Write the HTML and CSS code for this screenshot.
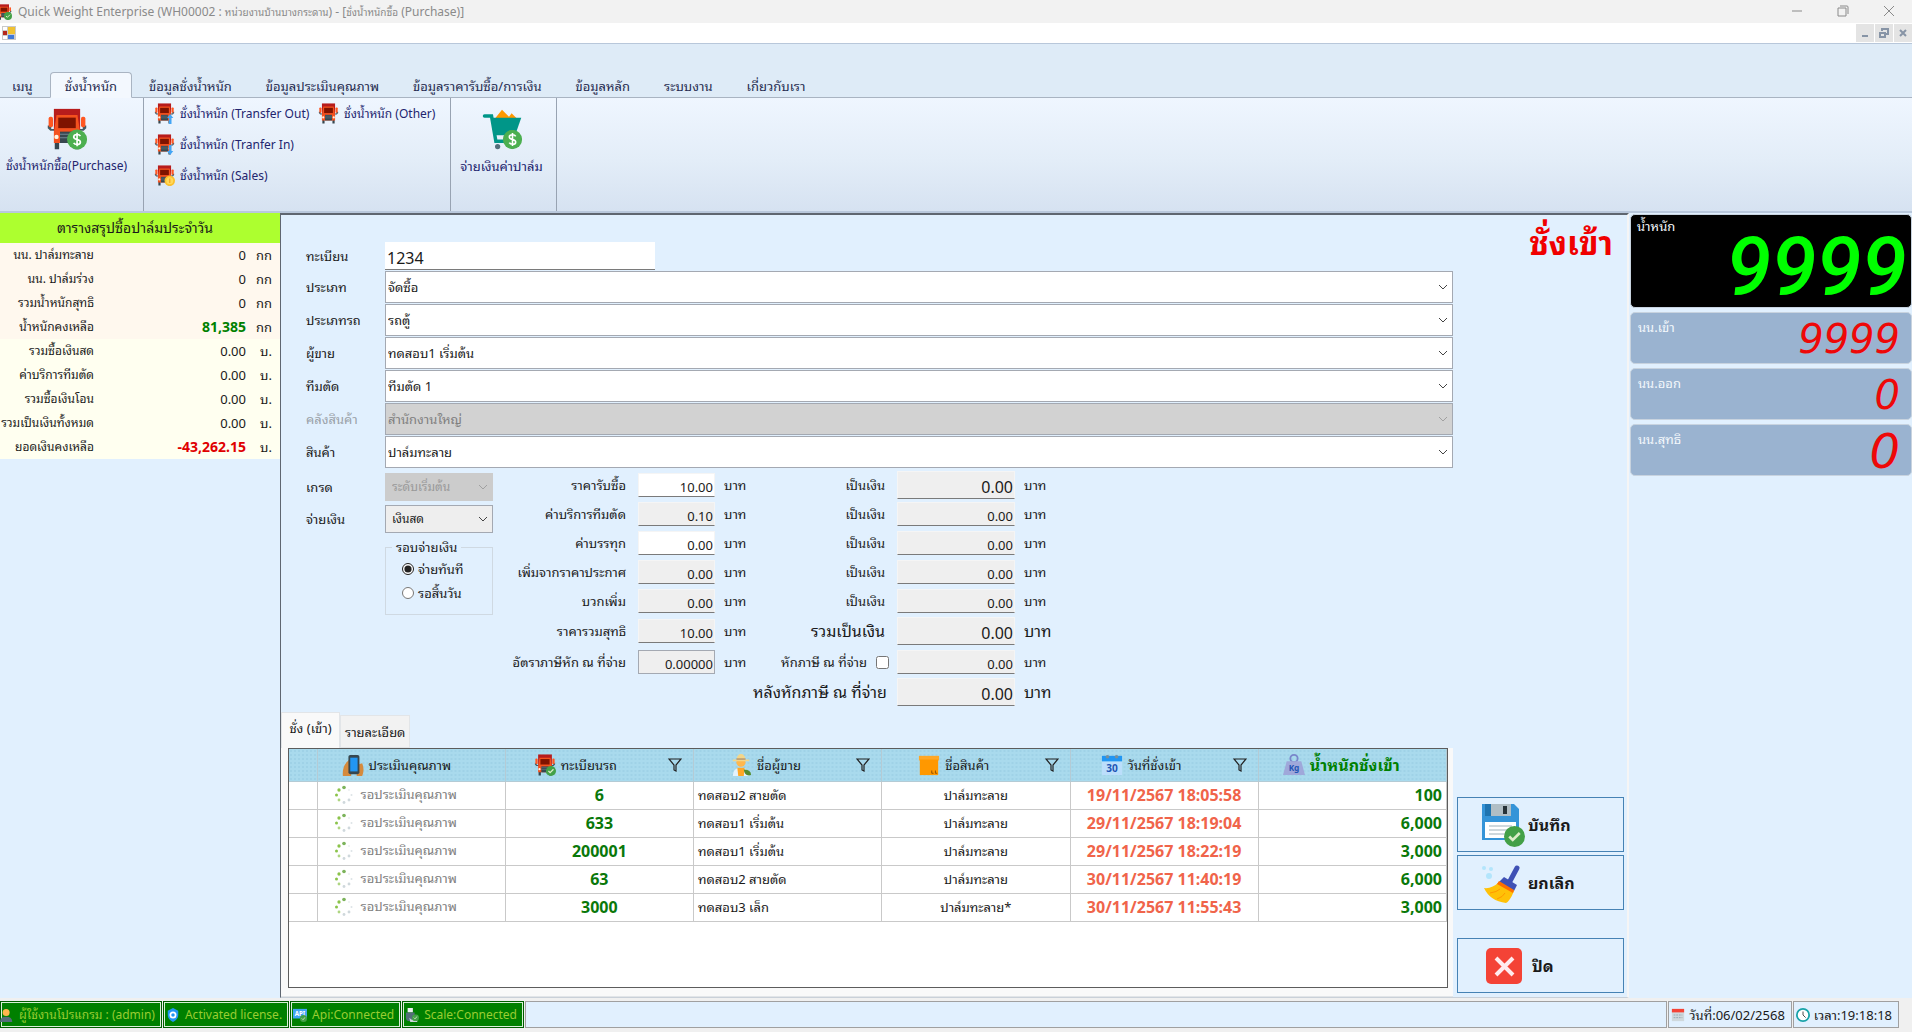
FILE: index.html
```
<!DOCTYPE html>
<html lang="th">
<head>
  <meta charset="UTF-8">
  <meta name="viewport" content="width=device-width, initial-scale=1.0">
  <title>Quick Weight Enterprise</title>
  <link rel="stylesheet" href="styles.css">
</head>
<body>
  <!-- Shared icons -->
  <svg class="icon-defs" aria-hidden="true">
    <symbol id="truck" viewBox="0 0 48 48">
      <path d="M10 38h5v9h-5zM33 38h5v9h-5z" fill="#37474f"/>
      <path d="M2 20h4v4h36v-4h4v3l-3 3H5l-3-3z" fill="#455a64"/>
      <path d="M9 1h30v26H9z" fill="#b71c1c"/>
      <path d="M12 8h24l3 20v12H9V28z" fill="#f4511e"/>
      <path d="M14 11h20v12H14z" fill="#7f1300"/>
      <rect x="3" y="10" width="5" height="12" rx="2" fill="#ff5722"/>
      <rect x="40" y="10" width="5" height="12" rx="2" fill="#ff5722"/>
      <path d="M16 27h16v13H16z" fill="#37474f"/>
      <path d="M16 30h16M16 34h16" stroke="#78909c" stroke-width="1"/>
      <circle cx="12" cy="33" r="2.500" fill="#fff3e0"/>
      <circle cx="36" cy="33" r="2.500" fill="#fff3e0"/>
    </symbol>
    <symbol id="dollar" viewBox="0 0 24 24">
      <circle cx="12" cy="12" r="12" fill="#4caf50"/>
      <path d="M16 8q-1-2-4-2-4 0-4 3 0 2 4 3t4 3q0 3-4 3-3 0-4-2M12 4v16" fill="none" stroke="#fff" stroke-width="2"/>
    </symbol>
    <symbol id="check" viewBox="0 0 24 24">
      <circle cx="12" cy="12" r="12" fill="#43a047"/>
      <path d="M6 12l4 4 8-8" fill="none" stroke="#dcedc8" stroke-width="3"/>
    </symbol>
    <symbol id="spinner" viewBox="0 0 24 24">
      <circle cx="12" cy="3" r="2.200" fill="#7cb35b"/>
      <circle cx="6" cy="6" r="2" fill="#8bc34a"/>
      <circle cx="3" cy="12" r="1.800" fill="#8bc34a"/>
      <circle cx="6" cy="18" r="1.700" fill="#aed581"/>
      <circle cx="12" cy="21" r="1.700" fill="#cfd8dc"/>
      <circle cx="18" cy="18" r="1.700" fill="#cfd8dc"/>
      <circle cx="21" cy="12" r="1.200" fill="#dde3e6"/>
      <circle cx="18" cy="6" r="1" fill="#dde3e6"/>
    </symbol>
    <symbol id="funnel" viewBox="0 0 14 14">
      <path d="M1 1h12L8 7v6l-2-1V7z" fill="none" stroke="#222" stroke-width="1.200"/>
    </symbol>
  </svg>

  <header class="titlebar">
    <svg class="title-icon" viewBox="0 0 48 48"><use href="#truck"/><use href="#check" x="24" y="24" width="24" height="24"/></svg>
    <h1>Quick Weight Enterprise (WH00002 : <span>หน่วยงานบ้านบางกระดาน</span>) - [<span>ชั่งน้ำหนักซื้อ</span> (Purchase)]</h1>
    <div class="window-buttons">
      <button aria-label="Minimize"><svg viewBox="0 0 12 12"><path d="M1 6h10"/></svg></button>
      <button aria-label="Restore"><svg viewBox="0 0 12 12"><path d="M1 3h8v8H1zM3 1h7q1 0 1 1v7"/></svg></button>
      <button aria-label="Close"><svg viewBox="0 0 12 12"><path d="M1 1l10 10M11 1L1 11"/></svg></button>
    </div>
  </header>

  <div class="mdi-bar">
    <svg class="mdi-icon" viewBox="0 0 14 14">
      <path d="M0 0h14v14H0z" fill="#c9c9c9"/><path d="M1 1h4v3H1zM1 10h4v3H1z" fill="#fff"/>
      <path d="M1 5h4v4H1z" fill="#b5281c"/><path d="M6 1h7v7H6z" fill="#f0c132"/><path d="M6 9h6v4H6z" fill="#3f78d8"/>
    </svg>
    <div class="mdi-buttons">
      <button aria-label="Minimize form"><svg viewBox="0 0 10 10"><path d="M2 8h6"/></svg></button>
      <button aria-label="Restore form"><svg viewBox="0 0 10 10"><path d="M1 5h5v4H1zM3 3V1h6v5H7"/></svg></button>
      <button aria-label="Close form"><svg viewBox="0 0 10 10"><path d="M2 2l6 6M8 2L2 8"/></svg></button>
    </div>
  </div>

  <nav class="ribbon-tabs">
    <a href="#">เมนู</a>
    <a href="#" class="active">ชั่งน้ำหนัก</a>
    <a href="#">ข้อมูลชั่งน้ำหนัก</a>
    <a href="#">ข้อมูลประเมินคุณภาพ</a>
    <a href="#">ข้อมูลราคารับซื้อ/การเงิน</a>
    <a href="#">ข้อมูลหลัก</a>
    <a href="#">ระบบงาน</a>
    <a href="#">เกี่ยวกับเรา</a>
  </nav>

  <section class="ribbon">
    <div class="ribbon-group group-purchase">
      <button class="ribbon-large">
        <svg viewBox="0 0 48 48"><use href="#truck"/><use href="#dollar" x="24" y="24" width="23" height="24"/></svg>
        ชั่งน้ำหนักซื้อ(Purchase)
      </button>
    </div>
    <div class="ribbon-group group-weigh">
      <button class="ribbon-small"><svg viewBox="0 0 48 48"><use href="#truck"/><path d="M34 48V34h-4l7-9 7 9h-4v14z" fill="#42a5f5"/></svg>ชั่งน้ำหนัก (Transfer Out)</button>
      <button class="ribbon-small"><svg viewBox="0 0 48 48"><use href="#truck"/></svg>ชั่งน้ำหนัก (Other)</button>
      <button class="ribbon-small"><svg viewBox="0 0 48 48"><use href="#truck"/><path d="M34 25v14h-4l7 9 7-9h-4V25z" fill="#42a5f5"/></svg>ชั่งน้ำหนัก (Tranfer In)</button>
      <span></span>
      <button class="ribbon-small"><svg viewBox="0 0 48 48"><use href="#truck"/><circle cx="36" cy="36" r="12" fill="#fbc02d"/><circle cx="36" cy="36" r="8" fill="#ffd95a"/><path d="M36 31v10" stroke="#f9a825" stroke-width="3"/></svg>ชั่งน้ำหนัก (Sales)</button>
    </div>
    <div class="ribbon-group group-pay">
      <button class="ribbon-large">
        <svg viewBox="0 0 48 48">
          <path d="M16 12l8-10 8 8 3-4 6 6z" fill="#ff9800"/>
          <path d="M4 9h8l5 29h18" fill="none" stroke="#009688" stroke-width="4" stroke-linecap="round"/>
          <path d="M12 11h34l-7 20H16z" fill="#009688"/>
          <circle cx="19" cy="44" r="3" fill="#546e7a"/>
          <use href="#dollar" x="25" y="25" width="22" height="22"/>
        </svg>
        จ่ายเงินค่าปาล์ม
      </button>
    </div>
  </section>

  <main>
    <!-- Daily palm summary -->
    <aside class="summary">
      <table>
        <caption>ตารางสรุปซื้อปาล์มประจำวัน</caption>
        <tbody class="weights">
          <tr><th>นน. ปาล์มทะลาย</th><td>0</td><td>กก</td></tr>
          <tr><th>นน. ปาล์มร่วง</th><td>0</td><td>กก</td></tr>
          <tr><th>รวมน้ำหนักสุทธิ</th><td>0</td><td>กก</td></tr>
          <tr><th>น้ำหนักคงเหลือ</th><td class="positive">81,385</td><td>กก</td></tr>
        </tbody>
        <tbody class="money">
          <tr><th>รวมซื้อเงินสด</th><td>0.00</td><td>บ.</td></tr>
          <tr><th>ค่าบริการทีมตัด</th><td>0.00</td><td>บ.</td></tr>
          <tr><th>รวมซื้อเงินโอน</th><td>0.00</td><td>บ.</td></tr>
          <tr><th>รวมเป็นเงินทั้งหมด</th><td>0.00</td><td>บ.</td></tr>
          <tr><th>ยอดเงินคงเหลือ</th><td class="negative">-43,262.15</td><td>บ.</td></tr>
        </tbody>
      </table>
    </aside>

    <section class="workspace">
      <div class="entry">
        <form class="weigh-form">
          <div class="fields">
            <label for="plate">ทะเบียน</label>
            <input type="text" id="plate" class="plate" value="1234">
            <label for="type">ประเภท</label>
            <select id="type"><option>จัดซื้อ</option></select>
            <label for="car-type">ประเภทรถ</label>
            <select id="car-type"><option>รถตู้</option></select>
            <label for="seller">ผู้ขาย</label>
            <select id="seller"><option>ทดสอบ1 เริ่มต้น</option></select>
            <label for="team">ทีมตัด</label>
            <select id="team"><option>ทีมตัด 1</option></select>
            <label for="warehouse" class="disabled">คลังสินค้า</label>
            <select id="warehouse" disabled><option>สำนักงานใหญ่</option></select>
            <label for="product">สินค้า</label>
            <select id="product"><option>ปาล์มทะลาย</option></select>
          </div>

          <div class="pricing">
            <div class="payment">
              <label for="grade">เกรด</label>
              <select id="grade" disabled><option>ระดับเริ่มต้น</option></select>
              <label for="pay">จ่ายเงิน</label>
              <select id="pay"><option>เงินสด</option></select>
              <fieldset>
                <legend>รอบจ่ายเงิน</legend>
                <label><input type="radio" name="cycle" checked>จ่ายทันที</label>
                <label><input type="radio" name="cycle">รอสิ้นวัน</label>
              </fieldset>
            </div>

            <div class="amounts rates">
              <label for="r1">ราคารับซื้อ</label><input id="r1" type="text" class="editable" value="10.00"><span>บาท</span>
              <label for="r2">ค่าบริการทีมตัด</label><input id="r2" type="text" value="0.10"><span>บาท</span>
              <label for="r3">ค่าบรรทุก</label><input id="r3" type="text" class="editable" value="0.00"><span>บาท</span>
              <label for="r4">เพิ่มจากราคาประกาศ</label><input id="r4" type="text" value="0.00"><span>บาท</span>
              <label for="r5">บวกเพิ่ม</label><input id="r5" type="text" value="0.00"><span>บาท</span>
              <label for="r6">ราคารวมสุทธิ</label><input id="r6" type="text" value="10.00"><span>บาท</span>
              <label for="r7">อัตราภาษีหัก ณ ที่จ่าย</label><input id="r7" type="text" class="boxed" value="0.00000"><span>บาท</span>
            </div>

            <div class="amounts totals">
              <label for="t1">เป็นเงิน</label><input id="t1" type="text" class="big-value" value="0.00"><span>บาท</span>
              <label for="t2">เป็นเงิน</label><input id="t2" type="text" value="0.00"><span>บาท</span>
              <label for="t3">เป็นเงิน</label><input id="t3" type="text" value="0.00"><span>บาท</span>
              <label for="t4">เป็นเงิน</label><input id="t4" type="text" value="0.00"><span>บาท</span>
              <label for="t5">เป็นเงิน</label><input id="t5" type="text" value="0.00"><span>บาท</span>
              <label for="t6" class="big">รวมเป็นเงิน</label><input id="t6" type="text" class="big-value" value="0.00"><span class="big">บาท</span>
              <label class="tax">หักภาษี ณ ที่จ่าย <input type="checkbox"></label><input type="text" aria-label="หักภาษี ณ ที่จ่าย" value="0.00"><span>บาท</span>
              <label for="t8" class="big">หลังหักภาษี ณ ที่จ่าย</label><input id="t8" type="text" class="big-value" value="0.00"><span class="big">บาท</span>
            </div>
          </div>
        </form>

        <div class="tabs">
          <button class="active">ชั่ง (เข้า)</button>
          <button>รายละเอียด</button>
        </div>
        <div class="tab-panel">
          <div class="grid-box">
            <table class="grid">
              <thead>
                <tr>
                  <th class="selector"></th>
                  <th><div class="head"><svg viewBox="0 0 24 24"><path d="M1 24q-1-9 4-15l5-5v20zM16 24V12l6-2q3 7 0 14z" fill="#d68a3c"/><rect x="7" y="1" width="12" height="21" rx="2" fill="#37474f"/><path d="M9 4h8v15H9z" fill="#2196f3"/></svg>ประเมินคุณภาพ</div></th>
                  <th><div class="head"><svg viewBox="0 0 48 48"><use href="#truck"/><use href="#check" x="26" y="26" width="22" height="22"/></svg>ทะเบียนรถ<button aria-label="Filter"><svg><use href="#funnel"/></svg></button></div></th>
                  <th><div class="head"><svg viewBox="0 0 24 24"><path d="M3 24q0-9 9-9t9 9z" fill="#e3f2fd"/><path d="M8 15h8l-1 9H9z" fill="#ffa726"/><circle cx="12" cy="9" r="5" fill="#ffb74d"/><path d="M3 6h4q1-6 5-6t5 6h4v2H3z" fill="#f3d68a"/><path d="M7 5h10v1H7z" fill="#8d6e63"/><path d="M15 17q8 0 8 6-7 2-8-6z" fill="#558b2f"/></svg>ชื่อผู้ขาย<button aria-label="Filter"><svg><use href="#funnel"/></svg></button></div></th>
                  <th><div class="head"><svg viewBox="0 0 24 24"><path d="M1 2h22v5H1z" fill="#ffa726"/><path d="M2 6h20v17H2z" fill="#ff9800"/><path d="M15 18v3h2M19 18v3h2" fill="none" stroke="#8a4b00"/></svg>ชื่อสินค้า<button aria-label="Filter"><svg><use href="#funnel"/></svg></button></div></th>
                  <th><div class="head"><svg viewBox="0 0 24 24"><path d="M1 8h22v15H1z" fill="#bbdefb"/><path d="M1 2h22v6H1z" fill="#2196f3"/><circle cx="7" cy="3" r="2" fill="#78909c"/><circle cx="17" cy="3" r="2" fill="#78909c"/><text x="12" y="20" text-anchor="middle" class="icon-text">30</text></svg>วันที่ชั่งเข้า<button aria-label="Filter"><svg><use href="#funnel"/></svg></button></div></th>
                  <th class="weight-head"><div class="head"><svg viewBox="0 0 24 24"><circle cx="12" cy="5" r="4" fill="none" stroke="#7986cb" stroke-width="2"/><path d="M4 8h16l4 15H0z" fill="#9fa8da"/><text x="12" y="19" text-anchor="middle" class="icon-text kg">Kg</text></svg>น้ำหนักชั่งเข้า</div></th>
                </tr>
              </thead>
              <tbody>
                <tr><td></td><td class="state"><svg><use href="#spinner"/></svg>รอประเมินคุณภาพ</td><td class="plate-no">6</td><td>ทดสอบ2 สายตัด</td><td class="product">ปาล์มทะลาย</td><td class="date">19/11/2567 18:05:58</td><td class="weight">100</td></tr>
                <tr><td></td><td class="state"><svg><use href="#spinner"/></svg>รอประเมินคุณภาพ</td><td class="plate-no">633</td><td>ทดสอบ1 เริ่มต้น</td><td class="product">ปาล์มทะลาย</td><td class="date">29/11/2567 18:19:04</td><td class="weight">6,000</td></tr>
                <tr><td></td><td class="state"><svg><use href="#spinner"/></svg>รอประเมินคุณภาพ</td><td class="plate-no">200001</td><td>ทดสอบ1 เริ่มต้น</td><td class="product">ปาล์มทะลาย</td><td class="date">29/11/2567 18:22:19</td><td class="weight">3,000</td></tr>
                <tr><td></td><td class="state"><svg><use href="#spinner"/></svg>รอประเมินคุณภาพ</td><td class="plate-no">63</td><td>ทดสอบ2 สายตัด</td><td class="product">ปาล์มทะลาย</td><td class="date">30/11/2567 11:40:19</td><td class="weight">6,000</td></tr>
                <tr><td></td><td class="state"><svg><use href="#spinner"/></svg>รอประเมินคุณภาพ</td><td class="plate-no">3000</td><td>ทดสอบ3 เล็ก</td><td class="product">ปาล์มทะลาย*</td><td class="date">30/11/2567 11:55:43</td><td class="weight">3,000</td></tr>
              </tbody>
            </table>
          </div>
        </div>
      </div>

      <div class="side">
        <h2>ชั่งเข้า</h2>
        <div class="actions">
          <button>
            <svg viewBox="0 0 44 44">
              <path d="M0 1h32l5 5v31H0z" fill="#3594d8"/><path d="M3 1h6v12H3z" fill="#1f74b0"/><path d="M9 1h20v12H9z" fill="#b0bec5"/><path d="M21 3h4v8h-4z" fill="#263238"/>
              <path d="M3 19h31v16H3z" fill="#fff"/><path d="M7 23h23M7 27h23M7 31h16" stroke="#cfd8dc" stroke-width="2"/>
              <use href="#check" x="22" y="23" width="21" height="21"/>
            </svg>
            บันทึก
          </button>
          <button>
            <svg viewBox="0 0 44 44">
              <circle cx="2" cy="7" r="2" fill="#b3e5fc"/><circle cx="9" cy="8" r="2" fill="#b3e5fc"/><circle cx="7" cy="15" r="3" fill="#b3e5fc"/>
              <path d="M35 7L27 22" stroke="#3f51b5" stroke-width="5" stroke-linecap="round"/>
              <path d="M22 16l13 8-3 6-15-9z" fill="#3f51b5"/>
              <path d="M17 21l15 9q-4 10-8 12Q8 40 2 27q8 1 15-6z" fill="#ffc107"/>
              <path d="M17 20l15 9-1 3-16-9z" fill="#ff6f00"/>
              <path d="M8 32q7-1 10-4M15 38q6-2 8-6" fill="none" stroke="#ff9800" stroke-width="1"/>
            </svg>
            ยกเลิก
          </button>
          <button class="close">
            <svg viewBox="0 0 44 44"><rect x="4" y="4" width="36" height="36" rx="5" fill="#f44336"/><path d="M14 14l17 17M31 14L14 31" stroke="#ffebee" stroke-width="4"/></svg>
            ปิด
          </button>
        </div>
      </div>
    </section>

    <!-- Scale readouts -->
    <aside class="readouts">
      <div class="readout live"><span>น้ำหนัก</span><output>9999</output></div>
      <div class="readout"><span>นน.เข้า</span><output>9999</output></div>
      <div class="readout"><span>นน.ออก</span><output>0</output></div>
      <div class="readout net"><span>นน.สุทธิ</span><output>0</output></div>
    </aside>
  </main>

  <footer class="statusbar">
    <div class="status ok"><svg viewBox="0 0 16 16"><circle cx="7" cy="5" r="4" fill="#ffb74d"/><path d="M0 16q0-6 7-6t7 6z" fill="#546e7a"/></svg>ผู้ใช้งานโปรแกรม : (admin)</div>
    <div class="status ok"><svg viewBox="0 0 16 16"><path d="M8 0l6 3v5q0 5-6 8-6-3-6-8V3z" fill="#2196f3"/><circle cx="8" cy="8" r="3" fill="none" stroke="#fff" stroke-width="2"/></svg>Activated license.</div>
    <div class="status ok"><svg viewBox="0 0 16 16"><path d="M0 1h16v11H0z" fill="#42a5f5"/><text x="8" y="9" text-anchor="middle" class="api-text">API</text><use href="#check" x="8" y="8" width="8" height="8"/></svg>Api:Connected</div>
    <div class="status ok"><svg viewBox="0 0 16 16"><path d="M3 0h6v5H3z" fill="#eceff1"/><path d="M1 5h10v6q0 4-5 4t-5-4z" fill="#546e7a"/><path d="M5 11q4 5 9 0v5H6z" fill="#cfd8dc"/><use href="#check" x="8" y="7" width="8" height="8"/></svg>Scale:Connected</div>
    <div class="status fill"></div>
    <div class="status"><svg viewBox="0 0 16 16"><path d="M1 4h14v11H1z" fill="#cfd8dc"/><path d="M1 1h14v4H1z" fill="#f44336"/><path d="M3 8h10M3 11h10" stroke="#90a4ae" stroke-dasharray="2 1"/></svg>วันที่:06/02/2568</div>
    <div class="status"><svg viewBox="0 0 16 16"><circle cx="8" cy="8" r="7" fill="#fff" stroke="#17a2a8" stroke-width="2"/><path d="M8 4v4l3 3" fill="none" stroke="#333"/></svg>เวลา:19:18:18</div>
  </footer>
</body>
</html>
```
FILE: styles.css
```
* {
  box-sizing: border-box;
}

body {
  margin: 0;
  min-height: 100vh;
  display: flex;
  flex-direction: column;
  background: #e1f0fe;
  color: #1a1a1a;
  font-family: "Noto Sans", "Noto Sans Thai Looped", "Noto Sans Thai", "Loma", sans-serif;
  font-size: 13px;
  line-height: 20px;
}

button, input, select {
  font: inherit;
  color: inherit;
  margin: 0;
}

button {
  border: 0;
  background: none;
  padding: 0;
  cursor: pointer;
}

.icon-defs {
  position: absolute;
  width: 0;
  height: 0;
}

/* Window title */
.titlebar {
  display: flex;
  align-items: center;
  height: 23px;
  background: #f2f2f2;
  color: #8a8a8a;
}

.titlebar h1 {
  margin: 0 auto 0 6px;
  font-size: 12px;
  font-weight: normal;
}

.titlebar h1 span {
  font-size: 10px;
}

.title-icon {
  width: 16px;
  height: 16px;
  margin-left: -4px;
}

.window-buttons {
  display: flex;
}

.window-buttons button {
  width: 46px;
  height: 23px;
}

.window-buttons svg {
  width: 12px;
  height: 12px;
  fill: none;
  stroke: #8a8a8a;
}

.mdi-bar {
  display: flex;
  justify-content: space-between;
  align-items: center;
  height: 21px;
  background: #fff;
  border-bottom: 1px solid #b8c7da;
}

.mdi-icon {
  width: 14px;
  height: 14px;
  margin-left: 2px;
}

.mdi-buttons {
  display: flex;
  gap: 1px;
}

.mdi-buttons button {
  display: flex;
  align-items: center;
  justify-content: center;
  width: 18px;
  height: 18px;
  background: #e4e4e4;
}

.mdi-buttons svg {
  width: 10px;
  height: 10px;
  fill: none;
  stroke: #8794a6;
  stroke-width: 2;
}

/* Ribbon */
.ribbon-tabs {
  display: flex;
  align-items: flex-end;
  height: 54px;
  background: #deebf7;
  border-bottom: 1px solid #a9b4c2;
}

.ribbon-tabs a {
  height: 26px;
  margin-bottom: -1px;
  padding: 3px 16px 0;
  border: 1px solid transparent;
  color: #262b50;
  text-decoration: none;
  white-space: nowrap;
}

.ribbon-tabs a:first-child {
  padding-left: 11px;
}

.ribbon-tabs .active {
  padding: 3px 14px 0;
  background: #f3f8fe;
  border-color: #a9b4c2 #a9b4c2 #f3f8fe;
  border-radius: 4px 4px 0 0;
}

.ribbon {
  display: flex;
  height: 115px;
  background: linear-gradient(#eff6ff, #e3edf8 55%, #d6e2f1);
  border-bottom: 2px solid #b9c8dc;
}

.ribbon-group {
  border-right: 1px solid #98a3b2;
}

.group-purchase {
  width: 144px;
}

.group-weigh {
  display: grid;
  grid-template-columns: 164px auto;
  grid-auto-rows: 31px;
  width: 307px;
  padding-left: 10px;
  font-size: 12px;
}

.group-pay {
  width: 106px;
}

.ribbon-large {
  display: flex;
  flex-direction: column;
  align-items: center;
  width: 100%;
  padding: 10px 10px 0 0;
  gap: 6px;
  color: #22246e;
  white-space: nowrap;
}

.group-purchase .ribbon-large {
  font-size: 12px;
}

.group-pay .ribbon-large {
  padding-right: 4px;
}

.ribbon-large svg {
  width: 42px;
  height: 42px;
}

.ribbon-small {
  display: flex;
  align-items: center;
  gap: 5px;
  color: #22246e;
  white-space: nowrap;
}

.ribbon-small svg {
  flex: none;
  width: 21px;
  height: 21px;
}

main {
  flex: 1;
  display: grid;
  grid-template-columns: 280px 1fr 283px;
}

/* Summary */
.summary table {
  width: 100%;
  border-collapse: collapse;
  table-layout: fixed;
}

.summary caption {
  height: 30px;
  padding-right: 10px;
  background: #adff2f;
  font-size: 14px;
  line-height: 30px;
}

.summary tr {
  height: 24px;
}

.summary th {
  width: 94px;
  padding: 0;
  font-size: 12px;
  font-weight: normal;
  text-align: right;
  white-space: nowrap;
}

.summary td {
  padding: 0;
  text-align: right;
}

.summary td:last-child {
  width: 34px;
  padding-right: 8px;
}

.weights {
  background: #fff8ee;
}

.money {
  background: #fffff0;
}

.summary .positive,
.summary .negative {
  font-size: 14px;
  font-weight: bold;
}

.summary .positive {
  color: #008000;
}

.summary .negative {
  color: #e00000;
}

/* Work area */
.workspace {
  display: flex;
  border: 1px solid #5f6670;
  border-top-width: 2px;
  border-right: 2px solid #f5f5f5;
  border-bottom-color: #c9d0d8;
}

.entry {
  flex: 1;
  display: flex;
  flex-direction: column;
  min-width: 0;
}

.weigh-form {
  padding: 27px 0 0 25px;
}

.fields {
  display: grid;
  grid-template-columns: 79px 1fr;
  row-gap: 1px;
  align-items: center;
}

.fields select {
  height: 32px;
  width: 100%;
}

.plate {
  width: 270px;
  height: 28px;
  padding: 4px 2px 0;
  border: 0;
  border-bottom: 1px solid #7a7a7a;
  font-size: 16px;
}

select {
  appearance: none;
  padding: 0 20px 0 2px;
  border: 1px solid #a4a9b2;
  border-radius: 0;
  background: #fff url("data:image/svg+xml,%3Csvg xmlns='http://www.w3.org/2000/svg' width='10' height='6'%3E%3Cpath d='M1 1l4 4 4-4' fill='none' stroke='%23444'/%3E%3C/svg%3E") no-repeat right 4px center;
}

select:disabled {
  background-color: #d2d2d2;
  background-image: url("data:image/svg+xml,%3Csvg xmlns='http://www.w3.org/2000/svg' width='10' height='6'%3E%3Cpath d='M1 1l4 4 4-4' fill='none' stroke='%23a0a0a0'/%3E%3C/svg%3E");
  color: #808080;
  opacity: 1;
}

.disabled {
  color: #9aa1a8;
}

.pricing {
  display: flex;
  height: 243px;
  padding-top: 2px;
}

.payment {
  display: grid;
  grid-template-columns: 79px 108px;
  grid-template-rows: 28px 28px auto;
  row-gap: 4px;
  align-content: start;
  align-items: center;
  padding-top: 3px;
}

.payment select {
  height: 28px;
  width: 108px;
  padding-left: 6px;
  background-color: #eee;
  font-size: 12px;
}

.payment select:disabled {
  background-color: #ccc;
  border-color: #ccc;
  color: #999;
}

.payment fieldset {
  grid-column: 2;
  width: 108px;
  height: 78px;
  margin: 0;
  padding: 0 0 0 16px;
  border: 1px solid #cfd9e2;
}

.payment legend {
  margin-left: -10px;
  padding: 0 4px;
}

.payment fieldset label {
  display: flex;
  align-items: center;
  gap: 4px;
  height: 24px;
}

input[type="radio"] {
  width: 12px;
  height: 12px;
  accent-color: #222;
}

.amounts {
  display: grid;
  grid-template-rows: repeat(5, 29px) 32px 30px 29px;
  align-items: center;
}

.rates {
  grid-template-columns: 145px 77px 38px;
}

.totals {
  grid-template-columns: 144px 118px 50px;
}

.amounts label {
  padding-right: 12px;
  text-align: right;
  white-space: nowrap;
}

.amounts span {
  padding-left: 9px;
}

.amounts > input {
  width: 100%;
  height: 24px;
  padding: 4px 1px 0;
  border: 1px solid #f5f5f5;
  border-bottom-color: #7a7a7a;
  background: #efefef;
  text-align: right;
}

.amounts > .editable {
  background: #fff;
}

.amounts > .boxed {
  border-color: #a4a9b2;
}

.amounts > .big-value {
  height: 28px;
  font-size: 16px;
}

.amounts .big {
  font-size: 16px;
}

.amounts .tax {
  display: flex;
  align-items: center;
  justify-content: flex-end;
  gap: 9px;
  padding-right: 8px;
}

.tax input {
  width: 13px;
  height: 13px;
  margin: 0;
}

/* Weighing list */
.tabs {
  display: flex;
  align-items: flex-end;
  height: 37px;
}

.tabs button {
  height: 33px;
  padding: 0 4px;
  background: #f2f2f2;
  border: 1px solid #e2e5e8;
  white-space: nowrap;
}

.tabs .active {
  width: 59px;
  height: 36px;
  padding-bottom: 6px;
  background: #f9f9f9;
  border-bottom: 0;
}

.tab-panel {
  flex: 1;
  display: flex;
  padding: 0 5px 8px 7px;
  background: #f9f9f9;
  border-bottom: 1px solid #e2e5e8;
}

.grid-box {
  flex: 1;
  background: #fff;
  border: 1px solid #5c5c5c;
}

.grid {
  width: 100%;
  table-layout: fixed;
  border-collapse: collapse;
}

.grid th {
  height: 32px;
  padding: 0;
  border: 1px solid #b4cbd5;
  border-width: 0 1px 1px 0;
  background: radial-gradient(#9fd2e7 1px, transparent 1px) 0 0 / 4px 4px #a9daed;
  font-weight: normal;
}

.grid .selector {
  width: 28px;
}

.head {
  display: flex;
  align-items: center;
  gap: 5px;
  padding: 0 11px 0 24px;
  white-space: nowrap;
}

.head > svg {
  width: 22px;
  height: 24px;
}

.head button {
  height: 14px;
  margin-left: auto;
}

.head button svg {
  display: block;
  width: 14px;
  height: 14px;
}

.grid th:nth-child(3) .head {
  padding-left: 28px;
}

.grid th:nth-child(4) .head,
.grid th:nth-child(5) .head {
  padding-left: 36px;
}

.grid th:nth-child(6) .head {
  padding-left: 30px;
}

.grid .weight-head {
  color: #008000;
  font-size: 16px;
  font-weight: bold;
}

.grid td {
  height: 28px;
  padding: 0 4px;
  border: 1px solid #c9c9c9;
  border-width: 0 1px 1px 0;
  white-space: nowrap;
}

.grid .state {
  padding-left: 16px;
  color: #808080;
}

.state svg {
  width: 20px;
  height: 22px;
  margin-right: 7px;
  vertical-align: middle;
}

.grid .plate-no,
.grid .product,
.grid .date {
  text-align: center;
}

.plate-no,
.date,
.weight {
  font-size: 16px;
  font-weight: bold;
}

.plate-no,
.weight {
  color: #0a780a;
}

.date {
  color: #f0644a;
}

.grid .weight {
  text-align: right;
}

.icon-text {
  fill: #1e55b5;
  font-size: 11px;
  font-weight: bold;
}

.icon-text.kg {
  font-size: 9px;
}

.api-text {
  fill: #fff;
  font-size: 7px;
  font-weight: bold;
}

/* Direction and form actions */
.side {
  display: flex;
  flex-direction: column;
  justify-content: space-between;
  width: 174px;
  padding: 0 3px 4px 4px;
}

.side h2 {
  margin: 0;
  padding: 8px 11px 0 0;
  color: #f00000;
  font-size: 33px;
  line-height: 40px;
  text-align: right;
}

.actions {
  display: flex;
  flex-direction: column;
  gap: 3px;
}

.actions button {
  display: flex;
  align-items: center;
  gap: 2px;
  height: 55px;
  padding-left: 24px;
  border: 1px solid #4682b4;
  font-size: 16px;
  font-weight: bold;
}

.actions svg {
  width: 44px;
  height: 44px;
}

.actions .close {
  gap: 6px;
  margin-top: 25px;
}

/* Readouts */
.readouts {
  display: flex;
  flex-direction: column;
  gap: 4px;
  padding: 1px 0 0 1px;
}

.readout {
  display: flex;
  justify-content: space-between;
  height: 52px;
  padding: 4px 11px 0 7px;
  border: 1px solid #c8d3df;
  border-radius: 5px;
  background: #9ab3d0;
  color: #f4f8fc;
}

.readout output {
  color: #ee0808;
  font: italic 40px/44px "DejaVu Sans", sans-serif;
}

.readout.net output {
  font-size: 48px;
}

.readout.live {
  height: 94px;
  padding: 1px 4px 0 6px;
  background: #000;
}

.readout.live output {
  color: #0f0;
  font: italic 500 82px/102px Roboto, sans-serif;
}

/* Status bar */
.statusbar {
  display: flex;
  gap: 1px;
  height: 34px;
  padding: 3px 13px 4px 0;
  background: #f0f0f0;
}

.status {
  display: flex;
  align-items: center;
  gap: 4px;
  padding: 0 6px 0 2px;
  border: 1px solid #a0a0a0;
  background: #e1f0fe;
  white-space: nowrap;
}

.status.ok {
  gap: 5px;
  border: 1px solid #005c00;
  box-shadow: inset 0 0 0 1px #d8f0d8;
  background: #008000;
  color: #9acd32;
  font-size: 12px;
}

.status.fill {
  flex: 1;
}

.status svg {
  width: 14px;
  height: 14px;
}

.status:first-child svg {
  margin-left: -3px;
}
```
